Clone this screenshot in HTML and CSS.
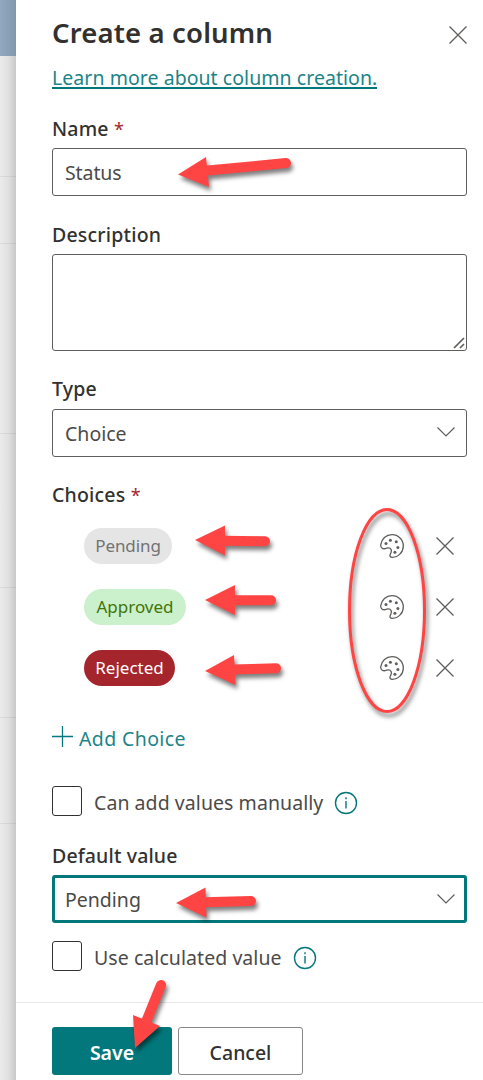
FILE: index.html
```html
<!DOCTYPE html>
<html lang="en">
<head>
<meta charset="utf-8">
<title>Create a column</title>
<link rel="stylesheet" href="styles.css">
</head>
<body>
<svg class="defs" width="0" height="0" aria-hidden="true">
  <symbol id="x" viewBox="0 0 18 18"><path d="M.5.5l17 17M17.5.5l-17 17"/></symbol>
  <symbol id="chevron" viewBox="0 0 18 10"><path d="M.5.5L9 9 17.5.5"/></symbol>
  <symbol id="palette" viewBox="0 0 24 24">
    <path d="M.7 10.800C1.600 4.900 6 .7 12 .7c6.300 0 11.300 5 11.300 11.200S18.400 23.300 12.300 23.300c-2.200 0-2.800-1.500-2-3 .9-1.700 1.600-3.100.8-4.800-.8-1.600-2.500-2-4.500-1.300C3.300 15.500.4 14.400.7 10.800z"/>
    <g class="dots"><circle cx="6" cy="9.600" r="1.500"/><circle cx="10.400" cy="6.200" r="1.500"/><circle cx="16.300" cy="7.700" r="1.500"/><circle cx="17.900" cy="13.500" r="1.500"/><circle cx="14.900" cy="18.200" r="1.500"/></g>
  </symbol>
  <symbol id="info" viewBox="0 0 24 24"><circle cx="12" cy="12" r="10.500"/><path d="M12 10v7.500M12 6.300v2"/></symbol>
</svg>
<div class="page">
  <aside class="backdrop">
    <div class="banner"></div>
    <div class="list"><i class="r1"></i><i class="r2"></i><i class="r3"></i><i class="r4"></i><i class="r5"></i><i class="r6"></i></div>
  </aside>
  <main class="panel">
    <div class="body">
      <header class="top"><h1 class="title">Create a column</h1><svg class="icon close"><use href="#x"/></svg></header>
      <div class="learn"><a class="link">Learn more about column creation.</a></div>
      <div class="label name-label">Name <span class="req">*</span></div>
      <div class="input"><span class="status">Status</span></div>
      <div class="label desc-label">Description</div>
      <div class="input area"><svg class="icon grip" viewBox="0 0 12 12"><path d="M1 11L11 1M7 11l4-4"/></svg></div>
      <div class="label type-label">Type</div>
      <div class="input"><span class="choice">Choice</span><svg class="icon chevron"><use href="#chevron"/></svg></div>
      <div class="label choices-label">Choices <span class="req">*</span></div>
      <div class="row"><span class="pill pending">Pending</span><svg class="icon palette"><use href="#palette"/></svg><svg class="icon remove"><use href="#x"/></svg></div>
      <div class="row"><span class="pill approved">Approved</span><svg class="icon palette"><use href="#palette"/></svg><svg class="icon remove"><use href="#x"/></svg></div>
      <div class="row"><span class="pill rejected">Rejected</span><svg class="icon palette"><use href="#palette"/></svg><svg class="icon remove"><use href="#x"/></svg></div>
      <div class="add"><svg class="icon plus" viewBox="0 0 21 21"><path d="M0 10.500h21M10.500 0v21"/></svg><span class="add-text">Add Choice</span></div>
      <div class="check"><span class="box"></span><span class="check-text manual">Can add values manually</span><svg class="icon info"><use href="#info"/></svg></div>
      <div class="label default-label">Default value</div>
      <div class="input focused"><span class="default">Pending</span><svg class="icon chevron"><use href="#chevron"/></svg></div>
      <div class="check calc"><span class="box"></span><span class="check-text">Use calculated value</span><svg class="icon info"><use href="#info"/></svg></div>
    </div>
    <footer class="footer"><span class="btn save">Save</span><span class="btn cancel">Cancel</span></footer>
  </main>
  <svg class="marks" viewBox="0 0 483 1080">
    <g><path class="head" d="M178 174.500L206 157l3 30z"/><path class="tail" d="M205 170.800L286 163"/></g>
    <g><path class="head" d="M195 540l30-14.500v30z"/><path class="tail" d="M223 540.800l42 .4"/></g>
    <g><path class="head" d="M205 600l30-15v30z"/><path class="tail" d="M233 600.200h38"/></g>
    <g><path class="head" d="M205 671l29-16 1.500 30z"/><path class="tail" d="M233 669.500l43-1.300"/></g>
    <g><path class="head" d="M176 903l29.500-15.500 1 30z"/><path class="tail" d="M204 902.200l47-1.200"/></g>
    <g><path class="head" d="M135 1048l-2-33 27 11z"/><path class="tail" d="M146 1022l15-37"/></g>
    <ellipse class="ring" cx="387" cy="610.500" rx="37.500" ry="101"/>
  </svg>
</div>
</body>
</html>
```
FILE: styles.css
```css
* { box-sizing: border-box; }
body { margin: 0; background: #fff; font-family: "Noto Sans", "Open Sans", sans-serif; font-size: 19.5px; font-weight: 400; color: #4c4a48; }
.defs { position: absolute; }
.page { position: relative; display: flex; width: 483px; height: 1080px; overflow: hidden; }
.backdrop { width: 16px; flex: none; display: flex; flex-direction: column; }
.banner { height: 56px; background: linear-gradient(90deg, #91a9c1, #8198ac); }
.list { flex: 1; background: linear-gradient(90deg, #ebebeb, #e1e1e1 50%, #c8c8c8); }
.list i { display: block; border-bottom: 1px solid rgba(0,0,0,.06); }
.r1 { height: 121px; } .r2 { height: 67px; } .r3 { height: 190px; } .r4 { height: 154px; } .r5 { height: 130px; } .r6 { height: 106px; }
.panel { flex: 1; min-width: 0; background: #fff; }
.body { height: 1002px; padding: 0 16px 0 36px; }
.icon { display: block; flex: none; fill: none; stroke: #605e5c; stroke-width: 1.3; }
.top { display: flex; justify-content: space-between; height: 66px; }
.title { margin: 0; font-size: 27.5px; line-height: 66px; font-weight: 600; color: #323130; letter-spacing: .15px; }
.close { width: 18px; height: 18px; margin-top: 26px; }
.learn { height: 24px; line-height: 24px; }
.link { display: inline-block; height: 23px; border-bottom: 2px solid #03787c; color: #1c8487; letter-spacing: .05px; white-space: nowrap; }
.label { height: 28px; line-height: 28px; font-size: 19.5px; font-weight: 500; color: #323130; letter-spacing: .2px; margin: 25px 0 5px; }
.req { color: #a4262c; font-weight: 400; font-size: 18px; }
.type-label { margin: 24px 0 6px; }
.choices-label { margin: 24px 0 6px; }
.default-label { margin-top: 26px; letter-spacing: .14px; }
.input { display: flex; align-items: center; justify-content: space-between; height: 48px; padding: 1px 11px 0 12px; border: 1px solid #605e5c; border-radius: 3px; }
.status { letter-spacing: -.1px; }
.area { height: 97px; padding: 0 1px 1px; align-items: flex-end; justify-content: flex-end; }
.grip { width: 12px; height: 12px; stroke-width: 1.7; }
.chevron { width: 18px; height: 10px; margin-top: -3px; stroke-width: 1.2; }
.focused { border: 3px solid #03787c; padding: 1px 9px 0 10px; }
.focused .chevron { margin-top: -2px; }
.row { display: flex; align-items: center; height: 61px; padding-left: 32px; }
.pill { display: flex; align-items: center; justify-content: center; height: 36px; border-radius: 18px; font-size: 17px; font-weight: 400; }
.pending { width: 88px; background: #e5e5e5; color: #737373; letter-spacing: -.1px; }
.approved { width: 102px; background: #caf0cc; color: #437406; }
.rejected { width: 91px; background: #a4262c; color: #fff; }
.palette { width: 24px; height: 24px; margin-left: auto; }
.palette, .dots { stroke-width: 1.3; }
.dots { fill: #605e5c; stroke: none; }
.remove { width: 18px; height: 18px; margin: 0 13px 0 32px; }
.add { display: flex; align-items: center; gap: 6px; height: 79px; color: #1c8487; }
.add-text { letter-spacing: .38px; padding-top: 1px; }
.plus { width: 21px; height: 21px; margin-top: -3px; stroke: #03787c; }
.check { display: flex; align-items: center; height: 30px; margin-top: 9px; }
.calc { margin-top: 18px; }
.check-text { padding-top: 3px; letter-spacing: .06px; }
.box { width: 30px; height: 30px; margin-right: 12px; border: 1px solid #323130; border-radius: 3px; }
.info { width: 24px; height: 24px; margin: 3px 0 0 11px; stroke: #03787c; stroke-width: 1.4; }
.footer { display: flex; gap: 6px; height: 78px; padding: 24px 0 0 36px; border-top: 1px solid #e8e8e8; }
.btn { display: flex; align-items: center; justify-content: center; height: 48px; padding-top: 2px; border-radius: 3px; }
.save { width: 120px; background: #03787c; color: #fff; font-weight: 600; }
.cancel { width: 125px; border: 1px solid #8a8886; color: #323130; font-weight: 500; }
.marks { position: absolute; inset: 0; width: 483px; height: 1080px; }
.marks g, .ring { filter: drop-shadow(2px 4px 2px rgba(0,0,0,.5)); }
.head { fill: #ff4444; }
.tail { fill: none; stroke: #ff4444; stroke-width: 10; stroke-linecap: round; }
.ring { fill: none; stroke: #ff4444; stroke-width: 3; }
```
